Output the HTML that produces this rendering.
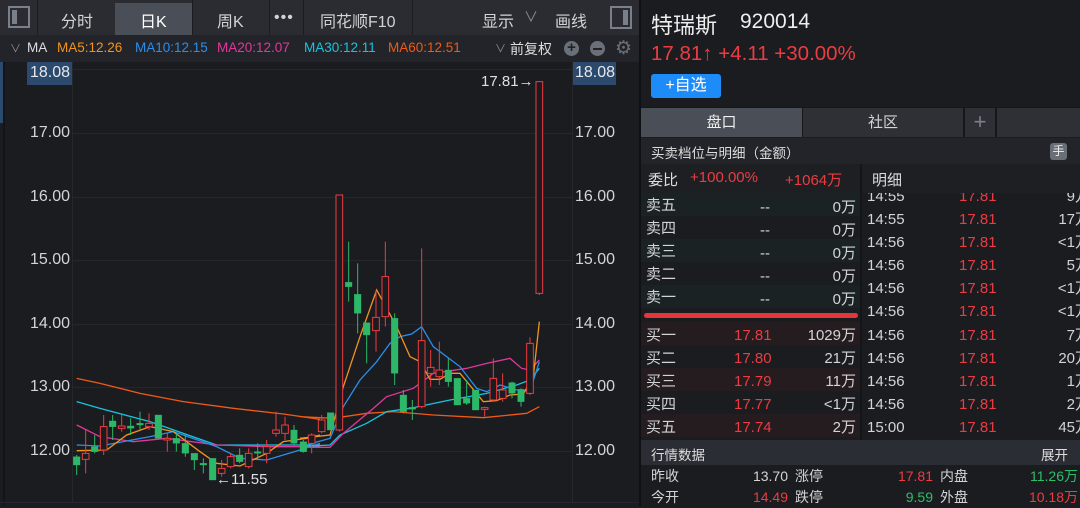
<!DOCTYPE html>
<html><head><meta charset="utf-8">
<style>
*{margin:0;padding:0;box-sizing:border-box}
body{width:1080px;height:506px;overflow:hidden;background:#1b1c20;font-family:"Liberation Sans","Noto Sans CJK SC",sans-serif;color:#d4d4d6;position:relative}
.a{position:absolute;white-space:nowrap}
.r{color:#ec3c42}.g{color:#2cbf6a}
</style></head><body>
<!-- toolbar -->
<div class="a" style="left:0;top:0;width:640px;height:35px;background:#2a2c31"></div>
<div class="a" style="left:8px;top:6px;width:22px;height:22px;border:2px solid #7a808a;background:#2a2c31"><div style="position:absolute;left:2px;top:2px;width:5px;height:14px;background:#7a808a"></div></div>
<div class="a" style="left:37px;top:0;width:1px;height:35px;background:#1b1c20"></div>
<div class="a" style="left:115px;top:3px;width:77px;height:32px;background:#4a4e56"></div>
<div class="a" style="left:192px;top:0;width:1px;height:35px;background:#1b1c20"></div>
<div class="a" style="left:269px;top:0;width:1px;height:35px;background:#1b1c20"></div>
<div class="a" style="left:303px;top:0;width:1px;height:35px;background:#1b1c20"></div>
<div class="a" style="left:412px;top:0;width:1px;height:35px;background:#1b1c20"></div>
<div class="a" style="left:61px;top:8px;font-size:16px">分时</div>
<div class="a" style="left:140px;top:8px;font-size:16px;color:#fff">日K</div>
<div class="a" style="left:217px;top:8px;font-size:16px">周K</div>
<div class="a" style="left:274px;top:9px;font-size:16px;letter-spacing:1px">•••</div>
<div class="a" style="left:320px;top:8px;font-size:16px">同花顺F10</div>
<div class="a" style="left:482px;top:8px;font-size:16px">显示</div>
<div class="a" style="left:524px;top:7px;font-size:14px;color:#8a8e96">∨</div>
<div class="a" style="left:555px;top:8px;font-size:16px">画线</div>
<div class="a" style="left:610px;top:6px;width:22px;height:23px;border:2px solid #7a808a"><div style="position:absolute;right:2px;top:2px;width:5px;height:15px;background:#7a808a"></div></div>
<!-- MA row -->
<div class="a" style="left:0;top:35px;width:640px;height:27px;background:#222429"></div>
<div class="a" style="left:10px;top:40px;font-size:11px;color:#8a8e96">∨</div>
<div class="a" style="left:27px;top:40px;font-size:13.5px;color:#ddd">MA</div>
<div class="a" style="left:57px;top:40px;font-size:13.5px;color:#f2941e">MA5:12.26</div>
<div class="a" style="left:135px;top:40px;font-size:13.5px;color:#2b8fea">MA10:12.15</div>
<div class="a" style="left:217px;top:40px;font-size:13.5px;color:#e0389c">MA20:12.07</div>
<div class="a" style="left:304px;top:40px;font-size:13.5px;color:#17c4de">MA30:12.11</div>
<div class="a" style="left:388px;top:40px;font-size:13.5px;color:#f05a14">MA60:12.51</div>
<div class="a" style="left:495px;top:40px;font-size:11px;color:#8a8e96">∨</div>
<div class="a" style="left:510px;top:39px;font-size:14px;color:#ddd">前复权</div>
<div class="a" style="left:564px;top:41px;width:15px;height:15px;border-radius:50%;background:#6a707a;color:#222;font-size:15px;line-height:14px;text-align:center;font-weight:bold">+</div>
<div class="a" style="left:590px;top:41px;width:15px;height:15px;border-radius:50%;background:#6a707a"><div style="position:absolute;left:3px;top:6.5px;width:9px;height:2px;background:#222"></div></div>
<div class="a" style="left:615px;top:37px;font-size:19px;color:#6a707a">⚙</div>
<!-- chart -->
<div class="a" style="left:0;top:62px;width:3px;height:61px;background:#2b4a6e"></div>
<div class="a" style="left:3px;top:62px;width:2px;height:444px;background:#141518"></div>
<svg class="a" style="left:0;top:62px" width="640" height="444" viewBox="0 62 640 444">
<g stroke="#25272c" stroke-width="1">
<line x1="72" y1="69.5" x2="572" y2="69.5"/><line x1="72" y1="133.5" x2="572" y2="133.5"/><line x1="72" y1="197.5" x2="572" y2="197.5"/><line x1="72" y1="260.5" x2="572" y2="260.5"/><line x1="72" y1="324.5" x2="572" y2="324.5"/><line x1="72" y1="387.5" x2="572" y2="387.5"/><line x1="72" y1="451.5" x2="572" y2="451.5"/>
<line x1="72.5" y1="62" x2="72.5" y2="502"/><line x1="572.5" y1="62" x2="572.5" y2="502"/>
<line x1="0" y1="502.5" x2="640" y2="502.5"/>
</g>
<g fill="none" stroke-width="1.3">
<g transform="translate(0,60) scale(0.33333)">
<polyline vector-effect="non-scaling-stroke" stroke="#f05a14" points="230,955 300,970 420,1000 550,1025 700,1045 850,1062 960,1078"/>
<polyline vector-effect="non-scaling-stroke" stroke="#17c4de" points="230,1025 300,1045 450,1085 550,1120 650,1155 960,1155"/>
<polyline vector-effect="non-scaling-stroke" stroke="#e0389c" points="230,1095 300,1130 400,1145 500,1135 650,1155 800,1160 960,1160"/>
<polyline vector-effect="non-scaling-stroke" stroke="#2b8fea" points="230,1155 300,1158 450,1130 520,1115 650,1160 720,1195 800,1200 900,1170 960,1150"/>
<polyline vector-effect="non-scaling-stroke" stroke="#f2941e" points="230,1172 320,1170 380,1125 450,1100 520,1115 600,1175 650,1210 720,1218 800,1180 850,1145 920,1135 960,1125"/>
</g>
<g transform="translate(300,60) scale(0.33333)">
<polyline vector-effect="non-scaling-stroke" stroke="#f05a14" points="0,1070 100,1075 200,1060 280,1055 400,1065 550,1073 680,1060 718,1040"/>
<polyline vector-effect="non-scaling-stroke" stroke="#17c4de" points="0,1160 90,1155 120,1125 200,1090 260,1055 330,1045 450,1020 560,1000 650,975 690,960 718,925"/>
<polyline vector-effect="non-scaling-stroke" stroke="#e0389c" points="0,1162 90,1162 130,1120 220,1045 260,1010 340,985 400,940 500,925 560,910 630,895 665,925 690,930 718,900"/>
<polyline vector-effect="non-scaling-stroke" stroke="#2b8fea" points="0,1160 90,1135 130,1040 180,960 230,905 270,850 300,830 335,822 365,800 400,860 480,920 530,985 560,995 600,975 650,990 690,993 718,905"/>
<polyline vector-effect="non-scaling-stroke" stroke="#f2941e" points="0,1135 90,1125 130,980 180,830 230,690 290,800 330,890 360,905 390,958 420,958 450,940 480,940 550,1025 590,1022 630,1005 670,1002 700,950 718,785"/>
</g>
</g>
<g transform="translate(0,60) scale(0.33333)" stroke-width="1" >
<g stroke="#2cb868" fill="#2cb868">
<line vector-effect="non-scaling-stroke" x1="230" y1="1185" x2="230" y2="1245"/><rect x="220" y="1190" width="20" height="25"/>
<line vector-effect="non-scaling-stroke" x1="284" y1="1125" x2="284" y2="1180"/><rect x="274" y="1160" width="20" height="15"/>
<line vector-effect="non-scaling-stroke" x1="338" y1="1065" x2="338" y2="1140"/><rect x="328" y="1083" width="20" height="17"/>
<line vector-effect="non-scaling-stroke" x1="392" y1="1075" x2="392" y2="1125"/><rect x="382" y="1098" width="20" height="7"/>
<line vector-effect="non-scaling-stroke" x1="420" y1="1055" x2="420" y2="1110"/><rect x="410" y="1090" width="20" height="5"/>
<rect x="465" y="1065" width="20" height="70"/>
<line vector-effect="non-scaling-stroke" x1="529" y1="1120" x2="529" y2="1175"/><rect x="519" y="1135" width="20" height="15"/>
<line vector-effect="non-scaling-stroke" x1="556" y1="1120" x2="556" y2="1190"/><rect x="546" y="1150" width="20" height="30"/>
<line vector-effect="non-scaling-stroke" x1="583" y1="1180" x2="583" y2="1230"/><rect x="573" y="1180" width="20" height="20"/>
<line vector-effect="non-scaling-stroke" x1="610" y1="1195" x2="610" y2="1240"/><rect x="600" y="1210" width="20" height="5"/>
<rect x="628" y="1195" width="20" height="65"/>
<line vector-effect="non-scaling-stroke" x1="719" y1="1165" x2="719" y2="1210"/><rect x="709" y="1185" width="20" height="20"/>
<line vector-effect="non-scaling-stroke" x1="773" y1="1150" x2="773" y2="1200"/><rect x="763" y="1175" width="20" height="5"/>
<line vector-effect="non-scaling-stroke" x1="882" y1="1095" x2="882" y2="1155"/><rect x="872" y="1110" width="20" height="40"/>
<line vector-effect="non-scaling-stroke" x1="910" y1="1140" x2="910" y2="1178"/><rect x="900" y="1145" width="20" height="30"/>
</g>
<g stroke="#ec3c42" fill="#1b1c20">
<line vector-effect="non-scaling-stroke" x1="257" y1="1110" x2="257" y2="1240"/><rect vector-effect="non-scaling-stroke" x="247" y="1180" width="20" height="18"/>
<line vector-effect="non-scaling-stroke" x1="311" y1="1065" x2="311" y2="1185"/><rect vector-effect="non-scaling-stroke" x="301" y="1100" width="20" height="70"/>
<line vector-effect="non-scaling-stroke" x1="365" y1="1065" x2="365" y2="1115"/><rect vector-effect="non-scaling-stroke" x="355" y="1098" width="20" height="7"/>
<line vector-effect="non-scaling-stroke" x1="447" y1="1060" x2="447" y2="1110"/><rect vector-effect="non-scaling-stroke" x="437" y="1090" width="20" height="10"/>
<line vector-effect="non-scaling-stroke" x1="502" y1="1120" x2="502" y2="1175"/><rect vector-effect="non-scaling-stroke" x="492" y="1135" width="20" height="5"/>
<line vector-effect="non-scaling-stroke" x1="665" y1="1200" x2="665" y2="1250"/><rect vector-effect="non-scaling-stroke" x="655" y="1225" width="20" height="15"/>
<line vector-effect="non-scaling-stroke" x1="692" y1="1180" x2="692" y2="1225"/><rect vector-effect="non-scaling-stroke" x="682" y="1190" width="20" height="30"/>
<line vector-effect="non-scaling-stroke" x1="746" y1="1165" x2="746" y2="1225"/><rect vector-effect="non-scaling-stroke" x="736" y="1180" width="20" height="40"/>
<line vector-effect="non-scaling-stroke" x1="800" y1="1140" x2="800" y2="1210"/><rect vector-effect="non-scaling-stroke" x="790" y="1160" width="20" height="20"/>
<line vector-effect="non-scaling-stroke" x1="828" y1="1055" x2="828" y2="1130"/><rect vector-effect="non-scaling-stroke" x="818" y="1110" width="20" height="10"/>
<line vector-effect="non-scaling-stroke" x1="855" y1="1070" x2="855" y2="1140"/><rect vector-effect="non-scaling-stroke" x="845" y="1095" width="20" height="25"/>
</g>
</g>
<g transform="translate(300,60) scale(0.33333)" stroke-width="1">
<g stroke="#2cb868" fill="#2cb868">
<rect x="82" y="1058" width="20" height="52"/>
<line vector-effect="non-scaling-stroke" x1="146" y1="545" x2="146" y2="725"/><rect x="136" y="667" width="20" height="13"/>
<line vector-effect="non-scaling-stroke" x1="173" y1="610" x2="173" y2="820"/><rect x="163" y="703" width="20" height="57"/>
<line vector-effect="non-scaling-stroke" x1="200" y1="788" x2="200" y2="910"/><rect x="190" y="788" width="20" height="37"/>
<line vector-effect="non-scaling-stroke" x1="284" y1="760" x2="284" y2="975"/><rect x="274" y="775" width="20" height="165"/>
<line vector-effect="non-scaling-stroke" x1="310" y1="990" x2="310" y2="1060"/><rect x="300" y="1005" width="20" height="50"/>
<line vector-effect="non-scaling-stroke" x1="337" y1="1020" x2="337" y2="1080"/><rect x="327" y="1042" width="20" height="6"/>
<line vector-effect="non-scaling-stroke" x1="445" y1="895" x2="445" y2="980"/><rect x="435" y="930" width="20" height="35"/>
<rect x="462" y="955" width="20" height="80"/>
<line vector-effect="non-scaling-stroke" x1="500" y1="960" x2="500" y2="1035"/><rect x="490" y="1015" width="20" height="15"/>
<rect x="517" y="990" width="20" height="60"/>
<line vector-effect="non-scaling-stroke" x1="636" y1="965" x2="636" y2="1015"/><rect x="626" y="968" width="20" height="32"/>
<line vector-effect="non-scaling-stroke" x1="663" y1="985" x2="663" y2="1040"/><rect x="653" y="988" width="20" height="37"/>
</g>
<g stroke="#ec3c42" fill="#1b1c20">
<line vector-effect="non-scaling-stroke" x1="35" y1="1120" x2="35" y2="1180"/><rect vector-effect="non-scaling-stroke" x="25" y="1125" width="20" height="25"/>
<line vector-effect="non-scaling-stroke" x1="65" y1="1065" x2="65" y2="1120"/><rect vector-effect="non-scaling-stroke" x="55" y="1080" width="20" height="35"/>
<line vector-effect="non-scaling-stroke" x1="118" y1="405" x2="118" y2="1115"/><rect vector-effect="non-scaling-stroke" x="108" y="405" width="20" height="705"/>
<line vector-effect="non-scaling-stroke" x1="228" y1="690" x2="228" y2="875"/><rect vector-effect="non-scaling-stroke" x="218" y="772" width="20" height="40"/>
<line vector-effect="non-scaling-stroke" x1="256" y1="545" x2="256" y2="800"/><rect vector-effect="non-scaling-stroke" x="246" y="650" width="20" height="120"/>
<line vector-effect="non-scaling-stroke" x1="365" y1="565" x2="365" y2="1045"/><rect vector-effect="non-scaling-stroke" x="355" y="842" width="20" height="198"/>
<line vector-effect="non-scaling-stroke" x1="392" y1="870" x2="392" y2="980"/><rect vector-effect="non-scaling-stroke" x="382" y="922" width="20" height="18"/>
<line vector-effect="non-scaling-stroke" x1="418" y1="845" x2="418" y2="975"/><rect vector-effect="non-scaling-stroke" x="408" y="930" width="20" height="20"/>
<line vector-effect="non-scaling-stroke" x1="554" y1="1040" x2="554" y2="1070"/><rect vector-effect="non-scaling-stroke" x="544" y="1043" width="20" height="5"/>
<line vector-effect="non-scaling-stroke" x1="580" y1="895" x2="580" y2="1025"/><rect vector-effect="non-scaling-stroke" x="570" y="955" width="20" height="65"/>
<line vector-effect="non-scaling-stroke" x1="608" y1="940" x2="608" y2="1025"/><rect vector-effect="non-scaling-stroke" x="598" y="990" width="20" height="25"/>
<line vector-effect="non-scaling-stroke" x1="690" y1="832" x2="690" y2="1005"/><rect vector-effect="non-scaling-stroke" x="680" y="850" width="20" height="150"/>
<line vector-effect="non-scaling-stroke" x1="718" y1="65" x2="718" y2="705"/><rect vector-effect="non-scaling-stroke" x="708" y="65" width="20" height="635"/>
</g>
</g>
<rect x="27" y="62" width="45" height="23" fill="#2b4a6e"/>
<rect x="573" y="62" width="43" height="23" fill="#2b4a6e"/>
</svg>
<div class="a" style="left:30px;top:64px;font-size:16px;color:#e8e8ea">18.08</div>
<div class="a" style="left:575px;top:64px;font-size:16px;color:#e8e8ea">18.08</div>
<div class="a" style="left:30px;top:124px;font-size:16px">17.00</div>
<div class="a" style="left:30px;top:188px;font-size:16px">16.00</div>
<div class="a" style="left:30px;top:251px;font-size:16px">15.00</div>
<div class="a" style="left:30px;top:315px;font-size:16px">14.00</div>
<div class="a" style="left:30px;top:378px;font-size:16px">13.00</div>
<div class="a" style="left:30px;top:442px;font-size:16px">12.00</div>
<div class="a" style="left:575px;top:124px;font-size:16px">17.00</div>
<div class="a" style="left:575px;top:188px;font-size:16px">16.00</div>
<div class="a" style="left:575px;top:251px;font-size:16px">15.00</div>
<div class="a" style="left:575px;top:315px;font-size:16px">14.00</div>
<div class="a" style="left:575px;top:378px;font-size:16px">13.00</div>
<div class="a" style="left:575px;top:442px;font-size:16px">12.00</div>
<div class="a" style="left:481px;top:73px;font-size:15px;color:#e0e0e0">17.81→</div>
<div class="a" style="left:216px;top:471px;font-size:15px;color:#e0e0e0">←11.55</div>
<!-- right panel -->
<div class="a" style="left:639px;top:0;width:2px;height:506px;background:#101114"></div>
<div class="a" style="left:641px;top:0;width:439px;height:107px;background:#1b1c20"></div>
<div class="a" style="left:651px;top:8px;font-size:22px;color:#eee">特瑞斯</div>
<div class="a" style="left:740px;top:10px;font-size:21px;color:#eee">920014</div>
<div class="a r" style="left:651px;top:42px;font-size:20.5px">17.81↑ +4.11 +30.00%</div>
<div class="a" style="left:651px;top:74px;width:70px;height:24px;background:#1d8cf8;border-radius:3px;color:#fff;font-size:16px;line-height:24px;text-align:center">+自选</div>
<div class="a" style="left:641px;top:107px;width:439px;height:30px;background:#16171a"></div>
<div class="a" style="left:641px;top:108px;width:161px;height:29px;background:#4a4e56;color:#eee;font-size:15px;line-height:29px;text-align:center">盘口</div>
<div class="a" style="left:803px;top:108px;width:160px;height:29px;background:#2e3036;font-size:15px;line-height:29px;text-align:center">社区</div>
<div class="a" style="left:965px;top:108px;width:30px;height:29px;background:#2e3036;font-size:22px;line-height:27px;text-align:center;color:#7a808a">+</div>
<div class="a" style="left:997px;top:108px;width:83px;height:29px;background:#2e3036"></div>
<div class="a" style="left:641px;top:138px;width:439px;height:26px;background:#222429"></div>
<div class="a" style="left:651px;top:142px;font-size:13.5px;color:#ddd">买卖档位与明细（金额）</div>
<div class="a" style="left:1050px;top:143px;width:17px;height:17px;background:#6a6e76;border-radius:3px;font-size:12px;line-height:17px;text-align:center;color:#eee">手</div>
<div class="a" style="left:641px;top:164px;width:219px;height:29px;background:#1e1f23"></div>
<div class="a" style="left:862px;top:164px;width:218px;height:29px;background:#1e1f23"></div>
<div class="a" style="left:860px;top:164px;width:2px;height:276px;background:#141518"></div>
<div class="a" style="left:648px;top:169px;font-size:15px;color:#ddd">委比</div>
<div class="a r" style="left:690px;top:169px;font-size:15px">+100.00%</div>
<div class="a r" style="left:785px;top:169px;font-size:15px">+1064万</div>
<div class="a" style="left:872px;top:169px;font-size:15px;color:#ddd">明细</div>
<div class="a" style="left:641px;top:193px;width:219px;height:23px;background:#1b2224"></div>
<div class="a" style="left:641px;top:239px;width:219px;height:23px;background:#1b2224"></div>
<div class="a" style="left:641px;top:285px;width:219px;height:23px;background:#1b2224"></div>
<div class="a" style="left:641px;top:322px;width:219px;height:23px;background:#241c1f"></div>
<div class="a" style="left:641px;top:368px;width:219px;height:23px;background:#241c1f"></div>
<div class="a" style="left:641px;top:414px;width:219px;height:23px;background:#241c1f"></div>
<div class="a" style="left:644px;top:313px;width:214px;height:5px;background:#e3363d;border-radius:3px"></div>
<div class="a" style="left:646px;top:196px;font-size:15px;line-height:20px">卖五<br><span style="line-height:26px">卖四</span><br>卖三<br><span style="line-height:26px">卖二</span><br>卖一</div>
<div class="a" style="left:760px;top:196px;font-size:15px;line-height:23px">--<br>--<br>--<br>--<br>--</div>
<div class="a" style="left:825px;top:196px;font-size:15px;line-height:23px;text-align:right;width:31px">0万<br>0万<br>0万<br>0万<br>0万</div>
<div class="a" style="left:646px;top:324px;font-size:15px;line-height:23px">买一<br>买二<br>买三<br>买四<br>买五</div>
<div class="a r" style="left:734px;top:324px;font-size:15px;line-height:23px">17.81<br>17.80<br>17.79<br>17.77<br>17.74</div>
<div class="a" style="left:790px;top:324px;font-size:15px;line-height:23px;text-align:right;width:66px">1029万<br>21万<br>11万<br>&lt;1万<br>2万</div>
<div class="a" style="left:862px;top:193px;width:218px;height:247px;overflow:hidden">
<div style="position:absolute;left:5px;top:-8px;font-size:15px;line-height:23.1px">14:55<br>14:55<br>14:56<br>14:56<br>14:56<br>14:56<br>14:56<br>14:56<br>14:56<br>14:56<br>15:00</div>
<div class="r" style="position:absolute;left:97px;top:-8px;font-size:15px;line-height:23.1px">17.81<br>17.81<br>17.81<br>17.81<br>17.81<br>17.81<br>17.81<br>17.81<br>17.81<br>17.81<br>17.81</div>
<div style="position:absolute;left:140px;width:88px;text-align:right;top:-8px;font-size:15px;line-height:23.1px">9万<br>17万<br>&lt;1万<br>5万<br>&lt;1万<br>&lt;1万<br>7万<br>20万<br>1万<br>2万<br>45万</div>
</div>
<div class="a" style="left:641px;top:440px;width:439px;height:25px;background:#2a2d33"></div>
<div class="a" style="left:651px;top:444px;font-size:13.5px;color:#ddd">行情数据</div>
<div class="a" style="left:1041px;top:444px;font-size:13.5px;color:#ddd">展开</div>
<div class="a" style="left:651px;top:466px;font-size:14px;line-height:21px">昨收<br>今开</div>
<div class="a" style="left:728px;top:466px;width:60px;text-align:right;font-size:14px;line-height:21px">13.70<br><span class="r">14.49</span></div>
<div class="a" style="left:795px;top:466px;font-size:14px;line-height:21px">涨停<br>跌停</div>
<div class="a" style="left:870px;top:466px;width:63px;text-align:right;font-size:14px;line-height:21px"><span class="r">17.81</span><br><span class="g">9.59</span></div>
<div class="a" style="left:940px;top:466px;font-size:14px;line-height:21px">内盘<br>外盘</div>
<div class="a" style="left:1000px;top:466px;width:78px;text-align:right;font-size:14px;line-height:21px"><span class="g">11.26万</span><br><span class="r">10.18万</span></div>
</body></html>
